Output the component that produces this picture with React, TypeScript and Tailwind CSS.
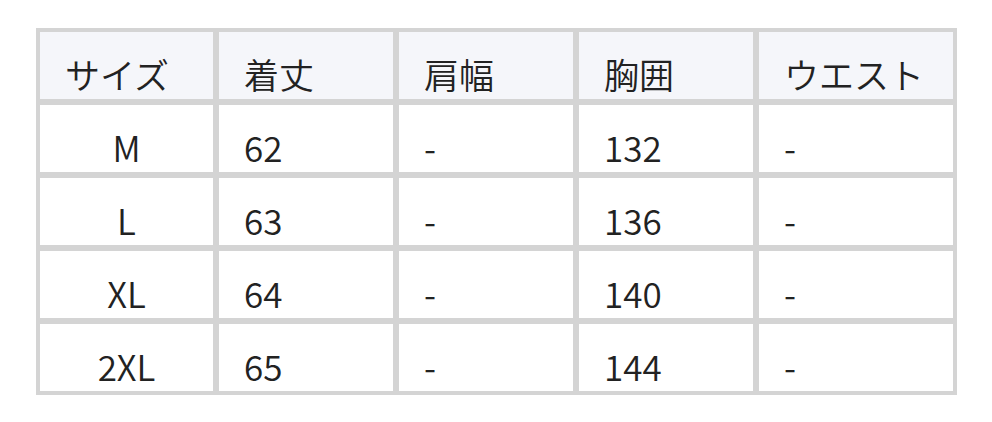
import React from "react";

const headers = ["サイズ", "着丈", "肩幅", "胸囲", "ウエスト"];
const rows = [
  ["M", "62", "-", "132", "-"],
  ["L", "63", "-", "136", "-"],
  ["XL", "64", "-", "140", "-"],
  ["2XL", "65", "-", "144", "-"],
];

export default function App() {
  return (
    <div
      className="w-[992px] h-[422px] bg-white pl-[36px] pt-[28px]"
      style={{ fontFamily: '"Noto Sans CJK JP", "Noto Sans", sans-serif' }}
    >
      <div className="grid w-[921px] grid-cols-[173px_174px_174px_174px_194px] auto-rows-[67px] gap-[6px] bg-[#d4d4d4] p-[4px] text-[#222222] text-[35px] font-[350] leading-none">
        {headers.map((h) => (
          <div key={h} className="flex items-end bg-[#f5f6fa] pl-[25px] pb-[8px]">
            {h}
          </div>
        ))}
        {rows.map((r, i) =>
          r.map((c, j) => (
            <div
              key={`${i}-${j}`}
              className={`flex items-end bg-white pb-[8px] ${j === 0 ? "justify-center" : "pl-[25px]"}`}
            >
              {c}
            </div>
          ))
        )}
      </div>
    </div>
  );
}
